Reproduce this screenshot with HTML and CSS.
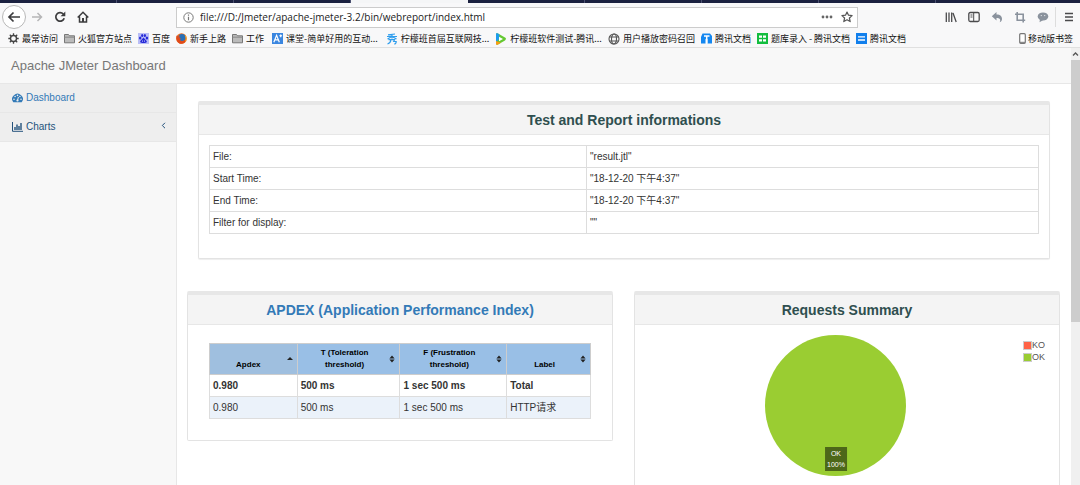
FILE: index.html
```html
<!DOCTYPE html>
<html lang="en">
<head>
<meta charset="utf-8">
<title>Apache JMeter Dashboard</title>
<link rel="stylesheet" href="styles.css">
</head>
<body>
<div class="tabs"><i></i><i></i><i></i><i class="current"></i><i></i><i></i><i></i><i></i><i></i></div>
<div class="toolbar">
  <div class="nav">
    <button class="back" aria-label="Back"><svg width="14" height="14" viewBox="0 0 14 14"><path d="M13 7H2M6.500 2.500L2 7l4.500 4.500" fill="none" stroke="#3c3c3e" stroke-width="1.700"/></svg></button>
    <button aria-label="Forward"><svg width="12" height="12" viewBox="0 0 12 12"><path d="M1 6h9.500M6.500 2l4 4-4 4" fill="none" stroke="#b5b5b7" stroke-width="1.500"/></svg></button>
    <button aria-label="Reload"><svg width="12" height="12" viewBox="0 0 12 12"><path d="M9.300 3A4.300 4.300 0 1 0 10.200 7.300" fill="none" stroke="#3c3c3e" stroke-width="1.700"/><path d="M11.300.6v4.700H6.600z" fill="#3c3c3e"/></svg></button>
    <button aria-label="Home"><svg width="12" height="12" viewBox="0 0 12 12"><path d="M.7 6.500L6 1.200l5.300 5.300M2.500 5.500v5.400h7V5.500" fill="none" stroke="#3c3c3e" stroke-width="1.500"/><path d="M5 7h2v4H5z" fill="#3c3c3e"/></svg></button>
  </div>
  <div class="urlbar">
    <svg width="11" height="11" viewBox="0 0 11 11"><circle cx="5.500" cy="5.500" r="4.700" fill="none" stroke="#777"/><path d="M5.500 4.800v3.400M5.500 2.600v1.200" stroke="#777" stroke-width="1.200"/></svg>
    <input aria-label="Address" value="file:///D:/Jmeter/apache-jmeter-3.2/bin/webreport/index.html">
    <button aria-label="Page actions"><svg width="12" height="12" viewBox="0 0 12 12" fill="#666"><circle cx="2" cy="6" r="1.400"/><circle cx="6" cy="6" r="1.400"/><circle cx="10" cy="6" r="1.400"/></svg></button>
    <button aria-label="Bookmark"><svg width="12" height="12" viewBox="0 0 12 12"><path d="M6 1l1.500 3.200 3.600.4-2.700 2.400.8 3.600L6 8.800l-3.200 1.800.8-3.600L.9 4.600l3.600-.4z" fill="none" stroke="#555" stroke-width="1.200" stroke-linejoin="round"/></svg></button>
  </div>
  <div class="tools">
    <button aria-label="Library"><svg width="12" height="12" viewBox="0 0 12 12"><path d="M1.300 1.500v9.500M4 1.500v9.500M6.700 1.500v9.500M8 2l3.200 9" stroke="#4a4a4c" stroke-width="1.300"/></svg></button>
    <button aria-label="Sidebars"><svg width="12" height="12" viewBox="0 0 12 12"><rect x=".8" y="1.500" width="10.400" height="9" rx="1.500" fill="none" stroke="#4a4a4c" stroke-width="1.300"/><path d="M5.700 1.500v9M2.500 4h2M2.500 6h2" stroke="#4a4a4c"/></svg></button>
    <button aria-label="Undo"><svg width="12" height="12" viewBox="0 0 12 12"><path d="M5.500 1v2.600c4 0 5.500 2 5.500 4.400 0 1.500-.8 2.600-2.300 3.200 1.500-3-.3-4.300-3.200-4.300v2.700L.8 5.300z" fill="#8a929d"/></svg></button>
    <button aria-label="Crop"><svg width="12" height="12" viewBox="0 0 12 12"><path d="M3.200 1v8.200h8M1 3.200h8.200V11.500" fill="none" stroke="#8a929d" stroke-width="1.600"/></svg></button>
    <button aria-label="Chat"><svg width="12" height="12" viewBox="0 0 12 12"><ellipse cx="6" cy="5.400" rx="5.300" ry="4" fill="#8a929d"/><path d="M3 8l-.5 3.200L6.300 9z" fill="#8a929d"/><path d="M3.800 4.600h.9M7.300 4.600h.9" stroke="#fff"/></svg></button>
    <button class="menu" aria-label="Menu"><svg width="12" height="12" viewBox="0 0 12 12"><path d="M2 2.500h8M2 6h8M2 9.500h8" stroke="#4a4a4c" stroke-width="1.300"/></svg></button>
  </div>
</div>
<nav class="bookmarks">
  <a href="#"><svg width="11" height="11" viewBox="0 0 11 11"><circle cx="5.500" cy="5.500" r="3" fill="none" stroke="#444" stroke-width="1.400"/><path d="M5.500.3v2M5.500 8.700v2M.3 5.500h2M8.700 5.500h2M1.800 1.800l1.400 1.400M7.800 7.800l1.400 1.400M9.200 1.800L7.800 3.200M3.200 7.800L1.800 9.200" stroke="#444" stroke-width="1.300"/></svg>最常访问</a>
  <a href="#"><svg width="11" height="11" viewBox="0 0 11 11"><path d="M.5 9.800V1.500h4l1 1.300h5v7z" fill="#bbb" stroke="#777"/><path d="M.5 4.200h10" stroke="#888"/></svg>火狐官方站点</a>
  <a href="#"><svg width="11" height="11" viewBox="0 0 11 11"><path d="M0 0h11v11H0z" fill="#b9bdf6"/><g fill="#2529d8"><ellipse cx="2.200" cy="5" rx="1.200" ry="1.500"/><ellipse cx="4.200" cy="2.500" rx="1.100" ry="1.600"/><ellipse cx="6.900" cy="2.500" rx="1.100" ry="1.600"/><ellipse cx="8.900" cy="5" rx="1.200" ry="1.500"/><path d="M5.500 4.600L8.700 8c.5 1.500-.7 2.300-3.200 1.900-2.500.4-3.700-.4-3.200-1.900z"/></g><path d="M4.500 7.500v1.200M6.500 7.500v1.200" stroke="#fff" stroke-width=".7"/></svg>百度</a>
  <a href="#"><svg width="11" height="11" viewBox="0 0 11 11"><circle cx="5.500" cy="5.500" r="5.300" fill="#e8681c"/><circle cx="6" cy="4.500" r="3.600" fill="#2a6fb5"/><path d="M.6 2.500L2 3.500l2-.3-.7 1.600 1.600.8-1 1.300C5.500 9 8.300 8.300 9.600 5.800c.7 3-2 5-4.100 5C2 10.800-.6 7 .6 2.500z" fill="#e04a1b"/><path d="M8.500 1.200c2.500 2 3 5.800.5 8 1.200-3 .8-5-.5-8z" fill="#fbb52a"/></svg>新手上路</a>
  <a href="#"><svg width="11" height="11" viewBox="0 0 11 11"><path d="M.5 9.800V1.500h4l1 1.300h5v7z" fill="#bbb" stroke="#777"/><path d="M.5 4.200h10" stroke="#888"/></svg>工作</a>
  <a href="#" class="wide"><svg width="11" height="11" viewBox="0 0 12 12"><path d="M0 0h12v12H0z" fill="#3a86e0"/><path d="M2 10l3-7.500L8 10M3.200 7.500h3.600M8 3h3M9.500 1.500v3" fill="none" stroke="#fff" stroke-width="1.300"/></svg>课堂-简单好用的互动...</a>
  <a href="#"><svg width="12" height="12" viewBox="0 0 12 12"><path d="M2 1.800l7-.8M1 3.500h10M6 1v4.500M5.500 3.800L1.500 6M6.500 3.800L10.500 6M2.500 6.700h6L7.700 8.500h2.500c0 1.500-.3 2.500-2 2.500M4.800 6.700C4.800 9 3.500 10.300 1.500 11" fill="none" stroke="#2e9ded" stroke-width="1.200"/></svg>柠檬班首届互联网技...</a>
  <a href="#"><svg width="12" height="12" viewBox="0 0 12 12"><path d="M1 1.500C1 0 2 .2 3 .6l7 4c1.300.7 1.300 2 0 2.800l-7 4c-1 .5-2 .3-2-1z" fill="#64c832"/><path d="M1 1.500C1 0 2 .2 3 .6l1.500.9L4 6l-3 4z" fill="#1d9bee"/><path d="M1 8l5 1.700-3 1.700c-1 .5-2 .3-2-1z" fill="#fb9b13"/><path d="M4 3.800v4.400L8 6z" fill="#fff"/></svg>柠檬班软件测试-腾讯...</a>
  <a href="#"><svg width="12" height="12" viewBox="0 0 12 12" fill="none" stroke="#555" stroke-width="1.100"><circle cx="6" cy="6" r="5"/><ellipse cx="6" cy="6" rx="2.500" ry="5"/><path d="M1.500 4h9M1.500 8h9"/></svg>用户播放密码召回</a>
  <a href="#"><svg width="11" height="11" viewBox="0 0 11 11"><path d="M1.500.5H9L11 3v7.500H6.500V6H4.500v4.500H0V4z" fill="#1487f0"/><path d="M3 3h5.500M5.700 3v7.500" stroke="#fff" stroke-width="1.500"/></svg>腾讯文档</a>
  <a href="#"><svg width="11" height="11" viewBox="0 0 11 11"><path d="M0 0h11v11H0z" fill="#12bd3e"/><path d="M2 2.500h3v2.300H2zM6 2.500h3v2.300H6zM2 6.200h3v2.300H2zM6 6.200h3v2.300H6z" fill="#fff"/></svg>题库录入 - 腾讯文档</a>
  <a href="#"><svg width="11" height="11" viewBox="0 0 11 11"><path d="M0 0h11v11H0z" fill="#117fec"/><path d="M2 3.800h7M2 7h7" stroke="#fff" stroke-width="1.300"/></svg>腾讯文档</a>
  <a href="#" class="mobile"><svg width="7" height="11" viewBox="0 0 7 11"><rect x=".7" y=".7" width="5.600" height="9.600" rx="1" fill="#fff" stroke="#777" stroke-width="1.200"/><path d="M1 9.300h5" stroke="#777"/></svg>移动版书签</a>
</nav>
<div class="viewport">
  <div class="page">
    <header class="brand"><a href="#">Apache JMeter Dashboard</a></header>
    <div class="columns">
      <aside class="side">
        <a href="#"><svg width="11" height="10" viewBox="0 0 11 10"><path d="M1.300 9.300A5.300 5.300 0 1 1 9.700 9.300z" fill="#337ab7"/><g fill="#eee"><circle cx="2" cy="6.300" r=".8"/><circle cx="3.100" cy="3.500" r=".8"/><circle cx="5.500" cy="2.400" r=".8"/><circle cx="7.900" cy="3.500" r=".8"/><circle cx="9" cy="6.300" r=".8"/></g><path d="M5.500 7.600L6.400 4" stroke="#eee"/><circle cx="5.500" cy="7.500" r="1.100" fill="#eee"/></svg>Dashboard</a>
        <a href="#" class="dark"><svg width="11" height="10" viewBox="0 0 11 10"><path d="M.5 0v9.300H11" fill="none" stroke="#23527c"/><path d="M3 8V5M5 8V2.500M7 8V4M9 8V1" stroke="#23527c" stroke-width="1.400"/></svg>Charts<svg class="chevron" width="5" height="7" viewBox="0 0 5 7"><path d="M4 .8L1.300 3.500 4 6.200" fill="none" stroke="#23527c"/></svg></a>
      </aside>
      <main class="main">
        <section class="panel inset">
          <h2>Test and Report informations</h2>
          <div class="info-body">
            <table class="info">
              <tr><td>File:</td><td>"result.jtl"</td></tr>
              <tr><td>Start Time:</td><td>"18-12-20 下午4:37"</td></tr>
              <tr><td>End Time:</td><td>"18-12-20 下午4:37"</td></tr>
              <tr><td>Filter for display:</td><td>""</td></tr>
            </table>
          </div>
        </section>
        <div class="pair">
          <section class="panel">
            <h2><a href="#">APDEX (Application Performance Index)</a></h2>
            <div class="apdex-body">
              <table class="apdex">
                <colgroup><col class="c1"><col class="c2"><col class="c3"><col class="c4"></colgroup>
                <thead><tr>
                  <th class="sorted"><div>Apdex<svg width="6" height="8" viewBox="0 0 6 8"><path d="M0 5l3-3 3 3z" fill="#222"/></svg></div></th>
                  <th><div>T (Toleration threshold)<svg width="6" height="8" viewBox="0 0 6 8"><path d="M.4 3.400L3 .5l2.600 2.900zM.4 4.600L3 7.500l2.600-2.900z" fill="#222"/></svg></div></th>
                  <th><div>F (Frustration threshold)<svg width="6" height="8" viewBox="0 0 6 8"><path d="M.4 3.400L3 .5l2.600 2.900zM.4 4.600L3 7.500l2.600-2.900z" fill="#222"/></svg></div></th>
                  <th><div>Label<svg width="6" height="8" viewBox="0 0 6 8"><path d="M.4 3.400L3 .5l2.600 2.900zM.4 4.600L3 7.500l2.600-2.900z" fill="#222"/></svg></div></th>
                </tr></thead>
                <tbody>
                  <tr class="total"><td>0.980</td><td>500 ms</td><td>1 sec 500 ms</td><td>Total</td></tr>
                  <tr class="odd"><td>0.980</td><td>500 ms</td><td>1 sec 500 ms</td><td>HTTP请求</td></tr>
                </tbody>
              </table>
            </div>
          </section>
          <section class="panel">
            <h2>Requests Summary</h2>
            <div class="chart">
              <div class="pie"><span>OK<br>100%</span></div>
              <ul><li><i class="ko"></i>KO</li><li><i class="ok"></i>OK</li></ul>
            </div>
          </section>
        </div>
      </main>
    </div>
  </div>
  <div class="scrollbar"><svg width="9" height="12" viewBox="0 0 9 12"><path d="M2 7.500L4.500 5 7 7.500" fill="none" stroke="#555" stroke-width="1.300"/></svg><div class="thumb"></div></div>
</div>
</body>
</html>
```
FILE: styles.css
```css
* { box-sizing: border-box; }
body {
  margin: 0;
  height: 100vh;
  overflow: hidden;
  display: flex;
  flex-direction: column;
  background: #fff;
  color: #333;
  font: 10px/14px "Liberation Sans", "Noto Sans CJK SC", sans-serif;
}
a { color: inherit; text-decoration: none; }
svg { flex: none; }
button {
  border: 0;
  padding: 0;
  background: none;
  display: flex;
  align-items: center;
  justify-content: center;
}

/* Browser chrome */
.tabs { display: flex; flex: none; height: 3px; background: #1b2140; overflow: hidden; }
.tabs i { flex: 0 0 117px; border-right: 1px solid #4b5070; }
.tabs i:last-child { flex: 1; border: 0; }
.tabs .current { background: #f5f6f7; border: 0; }
.toolbar {
  flex: none;
  display: flex;
  align-items: center;
  height: 28px;
  background: #f8f8f9;
}
.nav { display: flex; align-items: center; gap: 11px; width: 176px; padding-left: 2px; }
.nav .back {
  width: 24px;
  height: 24px;
  border: 1px solid #b8b8b8;
  border-radius: 50%;
  background: #fff;
  margin-right: -6px;
}
.urlbar {
  flex: 1;
  display: flex;
  align-items: center;
  gap: 8px;
  height: 21px;
  padding: 0 4px 0 6px;
  border: 1px solid #ccc;
  background: #fff;
}
.urlbar input {
  flex: 1;
  min-width: 0;
  margin-left: -2px;
  border: 0;
  padding: 0;
  outline: 0;
  background: none;
  color: #222;
  font: 10px/14px "Open Sans", sans-serif;
}
.tools {
  display: flex;
  align-items: center;
  justify-content: flex-end;
  gap: 11px;
  width: 222px;
  padding-right: 5px;
}
.menu { height: 20px; padding-left: 7px; border-left: 1px solid #ddd; margin-left: -5px; }
.bookmarks {
  flex: none;
  display: flex;
  align-items: center;
  gap: 6px;
  height: 17px;
  padding: 0 7px 1px 8px;
  border-bottom: 1px solid #e0e0e0;
  background: #f8f8f9;
  color: #111;
  font: 9px/14px "Noto Sans CJK SC", sans-serif;
  white-space: nowrap;
}
.bookmarks a { display: flex; align-items: center; gap: 3px; }
.bookmarks .wide { margin: 0 2px; }
.bookmarks .mobile { margin-left: auto; gap: 2px; }

/* Page */
.viewport { flex: 1; display: flex; min-height: 0; }
.page { flex: 1; min-width: 0; overflow: hidden; display: flex; flex-direction: column; }
.scrollbar { flex: 0 0 9px; background: #f0f0f0; }
.scrollbar svg { display: block; }
.thumb { height: 60%; background: #cdcdcd; }
.brand {
  flex: none;
  height: 36px;
  padding: 9px 11px;
  border-bottom: 1px solid #e7e7e7;
  background: #f8f8f8;
  color: #777;
  font-size: 13px;
  line-height: 18px;
}
.columns { flex: 1; display: flex; min-height: 0; }
.side { flex: 0 0 177px; background: #f8f8f8; border-right: 1px solid #e7e7e7; }
.side a {
  display: flex;
  align-items: center;
  gap: 3px;
  padding: 7px 10px 7px 12px;
  border-bottom: 1px solid #e7e7e7;
  background: #eee;
  color: #337ab7;
}
.side .dark { color: #23527c; }
.side .chevron { margin: 0 0 4px auto; }
.main { flex: 1; min-width: 0; padding: 17px 11px 0 10px; }

.panel { border: 1px solid #e3e3e3; border-top: 4px solid #e7e7e7; border-radius: 2px; background: #fff; }
.panel h2 {
  margin: 0;
  padding: 6px 6px 5px;
  border-bottom: 1px solid #e7e7e7;
  background: #f4f4f4;
  color: #2f4f4f;
  font-size: 14px;
  line-height: 18px;
  text-align: center;
}
.panel h2 a { color: #337ab7; }
.inset { margin: 0 10px 0 11px; box-shadow: 0 1px 1px #eee; }
.info-body { padding: 10px 10px 24px; }
.apdex-body { padding: 18px 21px 21px; }
.pair { display: grid; grid-template-columns: 1fr 1fr; gap: 21px; margin-top: 32px; align-items: start; }

table { width: 100%; border-collapse: collapse; table-layout: fixed; }
td { padding: 4px 4px 3px 3px; border: 1px solid #ddd; line-height: 14px; }
.info td:first-child { width: 377px; }
.apdex .c1 { width: 23%; }
.apdex .c2 { width: 27%; }
.apdex .c3 { width: 28%; }
.apdex .c4 { width: 22%; }
.apdex th {
  padding: 3px 4px;
  border: 1px solid #cdcdcd;
  background: #99bfe6;
  color: #000;
  font-size: 8px;
  line-height: 12px;
  vertical-align: bottom;
}
.apdex th div { position: relative; padding: 0 12px 0 4px; }
.apdex th svg { position: absolute; right: 0; top: 50%; margin-top: -4px; }
.apdex .sorted, .apdex th:last-child { height: 31px; }
.apdex .sorted { background: #9fbfdf; }
.apdex .sorted div, .apdex th:last-child div { padding-top: 12px; }
.apdex .sorted div { padding-right: 14px; }
.total { font-weight: bold; }
.odd td { background: #ebf2fa; }

.chart { display: flex; padding: 10px 14px 40px; }
.pie {
  position: relative;
  width: 141px;
  height: 141px;
  margin: 0 auto;
  border-radius: 50%;
  background: #9acd32;
}
.pie span {
  position: absolute;
  left: 50%;
  bottom: 5px;
  transform: translateX(-50%);
  padding: 1px 2px;
  background: #4d6719;
  color: #fff;
  font-size: 7px;
  line-height: 11px;
  text-align: center;
}
.chart ul { list-style: none; margin: 4px 0 0; padding: 0; color: #545454; font-size: 9px; line-height: 12px; }
.chart li { display: flex; align-items: center; }
.chart i { width: 9px; height: 9px; border: 1px solid #ccc; background-clip: content-box; }
.chart .ko { background-color: #ff6347; }
.chart .ok { background-color: #9acd32; }
```
